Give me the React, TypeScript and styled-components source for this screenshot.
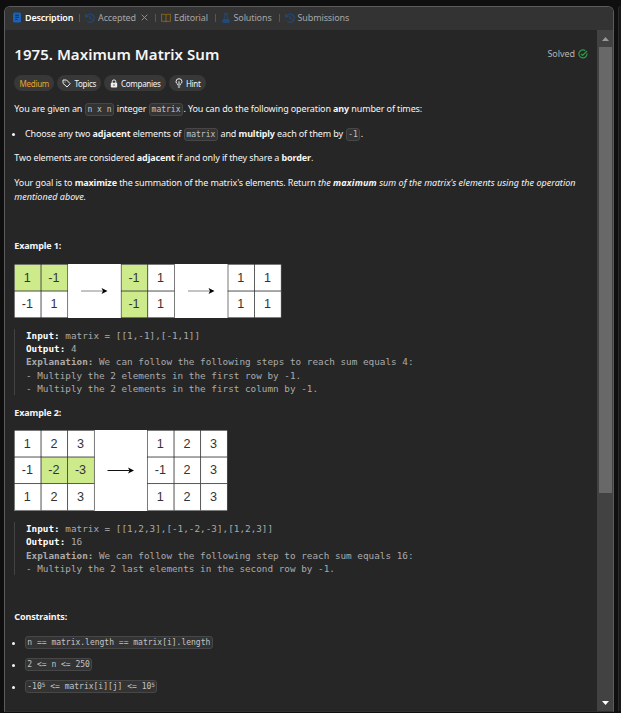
import React from 'react';
import styled, { createGlobalStyle } from 'styled-components';

const GlobalStyle = createGlobalStyle`
  * { box-sizing: border-box; }
  body { margin: 0; background: #0f0f0f; overflow: hidden; }
  p, h1, ul, pre { margin: 0; padding: 0; }
`;

const Screen = styled.div`
  display: flex;
  width: 621px;
  height: 713px;
  padding: 6px 0 0 4px;
  background: #0f0f0f;
  color: #f5f5f5;
  font-family: 'Noto Sans', sans-serif;
  font-size: 9px;
  letter-spacing: -0.13px;
  white-space: nowrap;
`;

const Panel = styled.section`
  display: flex;
  flex-direction: column;
  width: 611px;
  height: 706px;
  overflow: hidden;
  border: 1px solid #5c5c5c;
  border-bottom-color: #303030;
  border-radius: 6px 6px 0 0;
  background: #262626;
`;

const NextPanel = styled.div`
  width: 3px;
  height: 705px;
  margin-left: 4px;
  border-left: 1px solid #2b2b2b;
  border-radius: 5px 0 0 0;
  background: #181818;
`;

const TabBar = styled.nav`
  display: flex;
  align-items: center;
  flex: none;
  height: 23px;
  padding: 0 0 2px 7px;
  background: #333;
`;

const Tab = styled.div<{ $width: number; $active?: boolean }>`
  display: flex;
  align-items: center;
  flex: none;
  gap: 3px;
  width: ${(p) => p.$width}px;
  color: ${(p) => (p.$active ? '#fff' : '#a6a6a6')};
  font-weight: ${(p) => (p.$active ? 600 : 400)};
  letter-spacing: ${(p) => (p.$active ? '-0.2px' : '-0.12px')};
  line-height: 14px;
  svg { flex: none; }
`;

const TabDivider = styled.i`
  flex: none;
  width: 1px;
  height: 8px;
  margin-right: 5px;
  background: #555;
`;

const CloseIcon = styled.svg`
  margin-left: 2px;
`;

const Body = styled.div`
  display: flex;
  flex: 1;
  min-height: 0;
`;

const Content = styled.main`
  flex: 1;
  padding: 14px 9px 0 9.3px;
`;

const TitleRow = styled.header`
  display: flex;
  align-items: center;
  justify-content: space-between;
  height: 20px;
`;

const Title = styled.h1`
  font-size: 15px;
  font-weight: 600;
  line-height: 20px;
  letter-spacing: 0.04px;
`;

const Solved = styled.div`
  display: flex;
  align-items: center;
  gap: 3px;
  margin-top: -1px;
  color: #b4b4b4;
  letter-spacing: -0.05px;
`;

const Chips = styled.div`
  display: flex;
  gap: 3px;
  height: 16px;
  margin-top: 11px;
`;

const Chip = styled.span<{ $width: number; $tone?: string }>`
  display: flex;
  align-items: center;
  justify-content: center;
  gap: 3px;
  width: ${(p) => p.$width}px;
  border-radius: 8px;
  background: #383838;
  color: ${(p) => p.$tone ?? '#f5f5f5'};
  font-size: 8px;
  letter-spacing: -0.28px;
  svg { flex: none; }
`;

const Line = styled.p<{ $top: number }>`
  margin-top: ${(p) => p.$top}px;
  height: 16px;
  line-height: 16px;
`;

const Goal = styled.p`
  margin-top: 10px;
  line-height: 14px;
`;

const Italic = styled.em`
  letter-spacing: 0.03px;
  b { letter-spacing: 0.15px; }
`;

const Code = styled.code`
  display: inline-block;
  height: 13px;
  margin: 0 0.7px;
  padding: 0 1.3px;
  border: 1px solid #474747;
  border-radius: 3px;
  background: #333;
  color: #c4c4c4;
  font-family: 'DejaVu Sans Mono', monospace;
  font-size: 8px;
  line-height: 11px;
  letter-spacing: 0;
  vertical-align: 0;
  white-space: pre;
  sup {
    font-size: 6px;
    line-height: 0;
    vertical-align: 2.5px;
  }
`;

const List = styled.ul<{ $top: number; $gap?: number }>`
  display: flex;
  flex-direction: column;
  gap: ${(p) => p.$gap ?? 0}px;
  margin-top: ${(p) => p.$top}px;
  list-style: none;
`;

const Item = styled.li`
  display: flex;
  align-items: center;
  height: 16px;
  line-height: 16px;
  &::before {
    content: '';
    flex: none;
    width: 3px;
    height: 3px;
    margin: 1px 10px 0 -2.3px;
    border-radius: 50%;
    background: #f5f5f5;
  }
  code { margin-left: 0; }
`;

const ItemText = styled.span`
  code { margin-left: 0.7px; }
`;

const Heading = styled.p<{ $top: number }>`
  height: 16px;
  margin-top: ${(p) => p.$top}px;
  font-weight: 700;
  line-height: 16px;
`;

const Figure = styled.svg<{ $top: number }>`
  display: block;
  margin-top: ${(p) => p.$top}px;
`;

const Example = styled.pre<{ $top: number }>`
  margin-top: ${(p) => p.$top}px;
  padding-left: 10.7px;
  border-left: 1px solid #434343;
  color: #ababab;
  font-family: 'DejaVu Sans Mono', monospace;
  font-size: 9.33px;
  line-height: 13.35px;
  letter-spacing: 0;
  b { color: #fff; }
  strong { color: #ababab; }
`;

const Scrollbar = styled.aside`
  display: flex;
  flex-direction: column;
  align-items: center;
  justify-content: space-between;
  flex: none;
  width: 16px;
  height: 681px;
  background: #424242;
`;

const Thumb = styled.div`
  width: 13px;
  height: 446px;
  background: #686868;
`;

const ArrowButton = styled.div<{ $down?: boolean }>`
  display: flex;
  align-items: center;
  justify-content: center;
  height: 17px;
  margin-top: ${(p) => (p.$down ? 'auto' : '0')};
`;

const HistoryIcon = () => (
  <svg width="10" height="10" viewBox="0 0 10 10" fill="none" stroke="#1f4a7c" strokeWidth="1.1">
    <path d="M1.5 3.2A4.1 4.1 0 1 1 2.4 8.2M.6 1v2.7h2.7M5 2.8v2.5l1.9.9" />
  </svg>
);

const green = '#cdeb8b';

type GridProps = { x: number; rows: string[][]; marked?: string[] };

const MatrixGrid = ({ x, rows, marked = [] }: GridProps) => (
  <g transform={`translate(${x} .5)`}>
    {rows.map((row, r) =>
      row.map((value, c) => (
        <g key={`${r}${c}`} transform={`translate(${c * 26.6} ${r * 26.6})`}>
          <rect width="26.6" height="26.6" fill={marked.includes(`${r}${c}`) ? green : '#fff'} stroke="#333" strokeWidth=".65" />
          <text x="12.8" y="17.4" fontSize="12.6" fontFamily="Liberation Sans, sans-serif" letterSpacing="0" textAnchor="middle" fill="#333">
            {value}
          </text>
        </g>
      )),
    )}
  </g>
);

const Arrow = ({ x, y, color }: { x: number; y: number; color: string }) => (
  <g transform={`translate(${x} ${y})`}>
    <path d="M0 0H22" stroke={color} strokeWidth="1" />
    <path d="M26.5 0 20.5-3 22 0 20.5 3Z" fill="#000" />
  </g>
);

const ones = [['1', '1'], ['1', '1']];

export default function App() {
  return (
    <>
      <GlobalStyle />
      <Screen>
        <Panel>
          <TabBar>
            <Tab $width={67} $active>
              <svg width="10" height="11" viewBox="0 0 10 11">
                <rect x="1" y=".5" width="8" height="10" rx="1.6" fill="#1a62b5" />
                <path d="M3.3 3.2h3.5M3.3 5.3h3.5M3.3 7.5h2" stroke="#0d3157" />
              </svg>
              Description
            </Tab>
            <TabDivider />
            <Tab $width={70}>
              <HistoryIcon />
              Accepted
              <CloseIcon width="7" height="7" viewBox="0 0 7 7" stroke="#999" strokeWidth=".9">
                <path d="m.7.7 5.6 5.6m0-5.6L.7 6.3" />
              </CloseIcon>
            </Tab>
            <TabDivider />
            <Tab $width={53.5}>
              <svg width="10" height="10" viewBox="0 0 10 10" fill="none" stroke="#80601c" strokeWidth="1.1">
                <path d="M.6 1.2h3.2Q5 1.2 5 2.2q0-1 1.2-1h3.2v7H6.2Q5 8.2 5 9.2q0-1-1.2-1H.6ZM5 2v7" />
              </svg>
              Editorial
            </Tab>
            <TabDivider />
            <Tab $width={58}>
              <svg width="10" height="10" viewBox="0 0 10 10" fill="none" stroke="#1f4a7c">
                <path d="M3 .6h4M3.9.6v3.3L1.4 8.2q-.4 1.2.7 1.2h5.8q1.1 0 .7-1.2L6.1 3.9V.6" />
                <path d="M3 6.5h4l1.2 2.4H1.8Z" fill="#1f4a7c" />
              </svg>
              Solutions
            </Tab>
            <TabDivider />
            <Tab $width={70}>
              <HistoryIcon />
              Submissions
            </Tab>
          </TabBar>
          <Body>
            <Content>
              <TitleRow>
                <Title>1975. Maximum Matrix Sum</Title>
                <Solved>
                  Solved
                  <svg width="10" height="10" viewBox="0 0 10 10" fill="none" stroke="#2a9a48" strokeWidth="1.2">
                    <path d="M8.9 4.4A4 4 0 1 1 7.2 1.6M3 4.8l1.6 1.7L9 2" />
                  </svg>
                </Solved>
              </TitleRow>
              <Chips>
                <Chip $width={40} $tone="#e5a62d">Medium</Chip>
                <Chip $width={44}>
                  <svg width="9" height="9" viewBox="0 0 9 9" fill="none" stroke="#eee">
                    <path d="M1 1h3.5l3.7 3.7-3.2 3.3L1 4.3Z" strokeLinejoin="round" />
                    <circle cx="3" cy="3" r=".5" fill="#eee" stroke="none" />
                  </svg>
                  Topics
                </Chip>
                <Chip $width={62}>
                  <svg width="8" height="9" viewBox="0 0 8 9">
                    <path d="M2.2 4V2.7a1.800 1.800 0 0 1 3.600 0V4" fill="none" stroke="#eee" />
                    <rect x=".8" y="3.7" width="6.4" height="4.8" rx="1" fill="#eee" />
                    <path d="M4 5.3v1.5" stroke="#383838" />
                  </svg>
                  Companies
                </Chip>
                <Chip $width={37}>
                  <svg width="8" height="10" viewBox="0 0 8 10" fill="none" stroke="#eee">
                    <path d="M2.7 7V6.2Q1 5.2 1 3.7a3 3 0 0 1 6 0Q7 5.2 5.3 6.2V7ZM2.9 9h2.2M4 3.2V6" />
                  </svg>
                  Hint
                </Chip>
              </Chips>

              <Line $top={10}>
                You are given an <Code>n x n</Code> integer <Code>matrix</Code>. You can do the following operation <b>any</b> number of times:
              </Line>
              <List $top={9}>
                <Item>
                  <ItemText>
                    Choose any two <b>adjacent</b> elements of <Code>matrix</Code> and <b>multiply</b> each of them by <Code>-1</Code>.
                  </ItemText>
                </Item>
              </List>
              <Line $top={8}>
                Two elements are considered <b>adjacent</b> if and only if they share a <b>border</b>.
              </Line>
              <Goal>
                Your goal is to <b>maximize</b> the summation of the matrix's elements. Return <Italic>the <b>maximum</b> sum of the matrix's elements using the operation<br />mentioned above.</Italic>
              </Goal>

              <Heading $top={34}>Example 1:</Heading>
              <Figure $top={10} width="268" height="54" viewBox="0 0 268 54">
                <rect width="267" height="54" fill="#fff" />
                <MatrixGrid x={0.5} rows={[['1', '-1'], ['-1', '1']]} marked={['00', '01']} />
                <Arrow x={67} y={27} color="#888" />
                <MatrixGrid x={107.2} rows={[['-1', '1'], ['-1', '1']]} marked={['00', '10']} />
                <Arrow x={174} y={27} color="#888" />
                <MatrixGrid x={214} rows={ones} />
              </Figure>
              <Example $top={10.6}>
                <b>Input:</b> matrix = [[1,-1],[-1,1]]{'\n'}
                <b>Output:</b> 4{'\n'}
                <strong>Explanation:</strong> We can follow the following steps to reach sum equals 4:{'\n'}
                - Multiply the 2 elements in the first row by -1.{'\n'}
                - Multiply the 2 elements in the first column by -1.
              </Example>

              <Heading $top={9.65}>Example 2:</Heading>
              <Figure $top={9} width="214" height="81" viewBox="0 0 214 81">
                <rect width="213" height="81" fill="#fff" />
                <MatrixGrid x={0.5} rows={[['1', '2', '3'], ['-1', '-2', '-3'], ['1', '2', '3']]} marked={['11', '12']} />
                <Arrow x={93.5} y={40.5} color="#111" />
                <MatrixGrid x={133.5} rows={[['1', '2', '3'], ['-1', '2', '3'], ['1', '2', '3']]} />
              </Figure>
              <Example $top={11}>
                <b>Input:</b> matrix = [[1,2,3],[-1,-2,-3],[1,2,3]]{'\n'}
                <b>Output:</b> 16{'\n'}
                <strong>Explanation:</strong> We can follow the following step to reach sum equals 16:{'\n'}
                - Multiply the 2 last elements in the second row by -1.
              </Example>

              <Heading $top={33.6}>Constraints:</Heading>
              <List $top={10} $gap={6}>
                <Item><Code>n == matrix.length == matrix[i].length</Code></Item>
                <Item><Code>{'2 <= n <= 250'}</Code></Item>
                <Item><Code>-10<sup>5</sup>{' <= matrix[i][j] <= '}10<sup>5</sup></Code></Item>
              </List>
            </Content>
            <Scrollbar>
              <ArrowButton>
                <svg width="7" height="4" viewBox="0 0 7 4"><path d="M0 4 3.5 0 7 4Z" fill="#999" /></svg>
              </ArrowButton>
              <Thumb />
              <ArrowButton $down>
                <svg width="7" height="4" viewBox="0 0 7 4"><path d="M0 0h7L3.5 4Z" fill="#fff" /></svg>
              </ArrowButton>
            </Scrollbar>
          </Body>
        </Panel>
        <NextPanel />
      </Screen>
    </>
  );
}
